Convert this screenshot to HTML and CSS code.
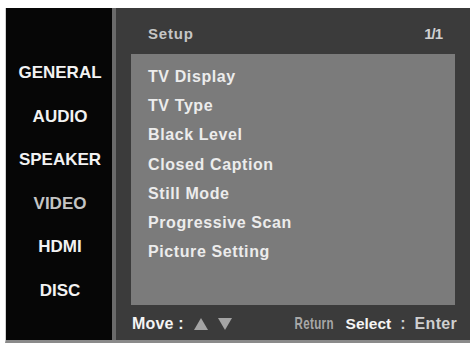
FILE: index.html
```html
<!DOCTYPE html>
<html>
<head>
<meta charset="utf-8">
<link rel="stylesheet" href="styles.css">
</head>
<body>
<div class="frame">
  <div class="screen">
    <nav class="side">
      <div class="cat">GENERAL</div>
      <div class="cat">AUDIO</div>
      <div class="cat">SPEAKER</div>
      <div class="cat dim">VIDEO</div>
      <div class="cat">HDMI</div>
      <div class="cat">DISC</div>
    </nav>
    <div class="sep"></div>
    <main class="main">
      <header class="head">
        <span class="title">Setup</span>
        <span class="page">1/1</span>
      </header>
      <ul class="list">
        <li>TV Display</li>
        <li>TV Type</li>
        <li>Black Level</li>
        <li>Closed Caption</li>
        <li>Still Mode</li>
        <li>Progressive Scan</li>
        <li>Picture Setting</li>
      </ul>
      <footer class="foot">
        <span class="move">Move :</span>
        <svg class="tri" width="14" height="12" viewBox="0 0 14 12"><polygon points="7,0 14,12 0,12" fill="#a4a4a4"/></svg>
        <svg class="tri down" width="14" height="12" viewBox="0 0 14 12"><polygon points="0,0 14,0 7,12" fill="#a4a4a4"/></svg>
        <span class="spacer"></span>
        <span class="ret">Return</span>
        <span class="sel">Select</span>
        <span class="colon">:</span>
        <span class="enter">Enter</span>
      </footer>
    </main>
  </div>
</div>
</body>
</html>
```
FILE: styles.css
```css
html, body {
  margin: 0;
  padding: 0;
  background: #ffffff;
}
body {
  width: 470px;
  height: 343px;
  overflow: hidden;
  font-family: "Liberation Sans", Arial, sans-serif;
  font-weight: bold;
}
.frame {
  padding: 8px 0 0 6px;
  width: 464px;
  height: 335px;
  box-sizing: content-box;
}
.screen {
  display: flex;
  height: 332px;
  border-bottom: 3px solid #8a8a8a;
  border-left: 1px solid #d0d0d0;
  margin-left: -1px;
}
.side {
  width: 106px;
  background: #060606;
  padding-top: 43px;
  box-sizing: border-box;
}
.cat {
  height: 43.6px;
  line-height: 43.6px;
  text-align: center;
  color: #f2f2f2;
  font-size: 17px;
  padding-left: 2px;
}
.cat.dim {
  color: #c4c4c4;
}
.sep {
  width: 4px;
  background: #6a6a6a;
}
.main {
  flex: 1;
  background: #3b3b3b;
  display: flex;
  flex-direction: column;
  padding: 0 15px;
}
.head {
  height: 46px;
  display: flex;
  justify-content: space-between;
  align-items: center;
  padding: 0 13px 0 17px;
  color: #c6c6c6;
  font-size: 15px;
  letter-spacing: 0.8px;
  box-sizing: border-box;
  padding-top: 4px;
}
.page {
  letter-spacing: -1px;
  color: #d0d0d0;
  font-size: 15px;
}
.list {
  list-style: none;
  margin: 0;
  height: 251px;
  box-sizing: border-box;
  background: #7b7b7b;
  padding: 8px 0 0 17px;
}
.list li {
  height: 29.2px;
  line-height: 29.2px;
  color: #ececec;
  font-size: 16px;
  letter-spacing: 0.6px;
}
.foot {
  flex: 1;
  display: flex;
  align-items: center;
  padding-left: 1px;
  padding-top: 2px;
  font-size: 16px;
}
.move {
  color: #f4f4f4;
  letter-spacing: 0.2px;
  margin-right: 10px;
}
.tri {
  margin-right: 10px;
}
.spacer {
  flex: 1;
}
.ret {
  display: inline-block;
  color: #a8a8a8;
  font-size: 17px;
  transform: scaleX(0.68);
  transform-origin: right center;
  margin-right: 12px;
  letter-spacing: 0.5px;
}
.sel {
  color: #f4f4f4;
  font-size: 15.5px;
  margin-right: 9px;
}
.colon {
  color: #cfcfcf;
  margin-right: 9px;
}
.enter {
  color: #cfcfcf;
  letter-spacing: 0.3px;
  margin-right: -2px;
}
```
